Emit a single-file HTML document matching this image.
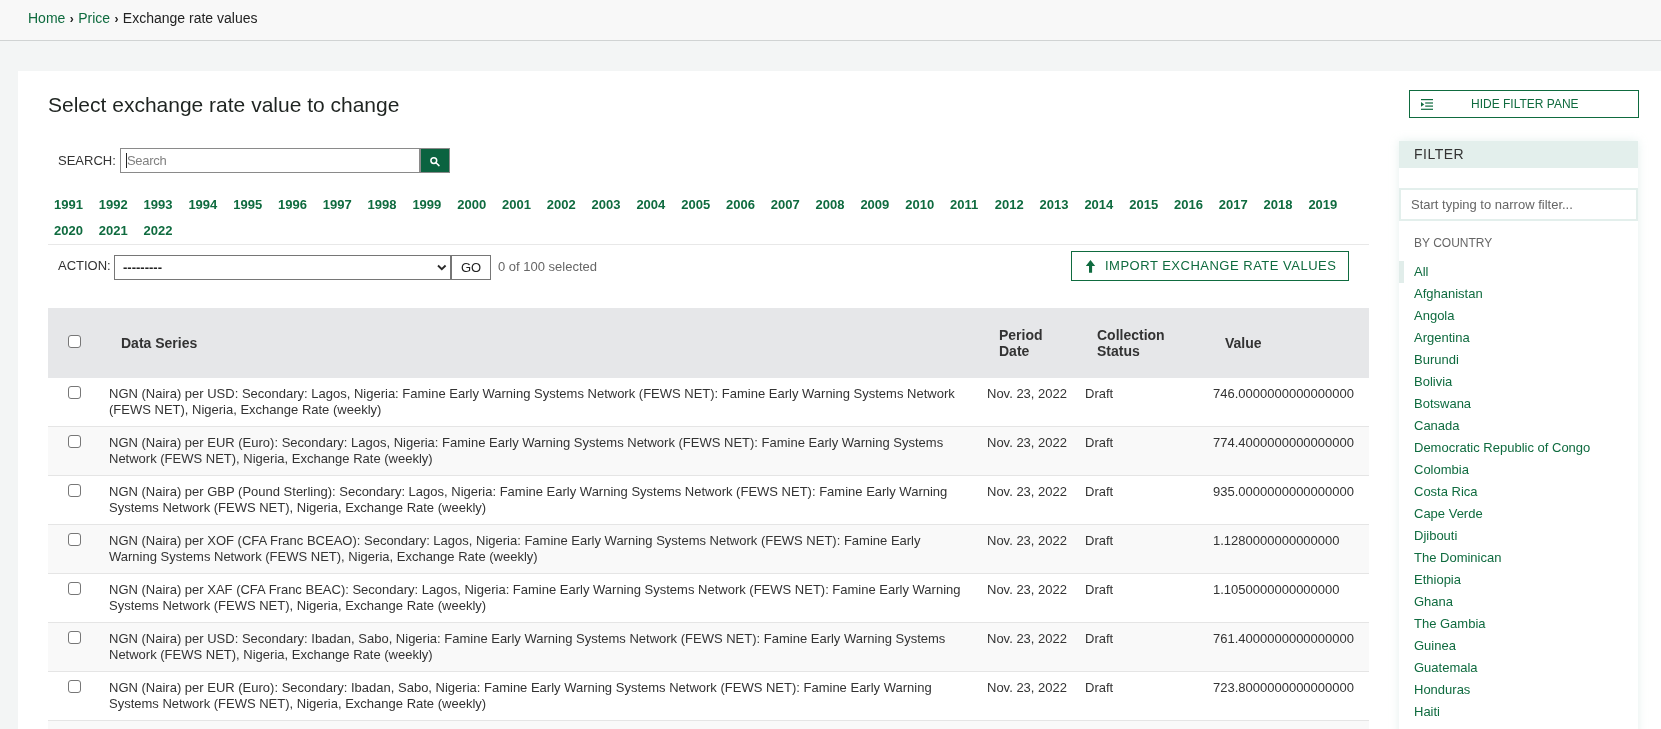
<!DOCTYPE html>
<html><head><meta charset="utf-8">
<style>
body{will-change:transform}
*{box-sizing:border-box}
html,body{margin:0;padding:0}
body{width:1661px;height:729px;overflow:hidden;position:relative;background:#f3f5f5;font-family:"Liberation Sans",sans-serif;color:#333;font-size:13px;line-height:16px}
a{color:#0f6b3f;text-decoration:none}
.abs{position:absolute}
#hdr{left:0;top:0;width:1661px;height:41px;background:#f8f8f8;border-bottom:1px solid #d0d3d3}
#crumbs{left:28px;top:10px;font-size:14px;line-height:16px;color:#222;white-space:nowrap}
#crumbs .sep{font-size:12px;font-weight:bold;padding:0 0.5px}
#box{left:18px;top:71px;width:1643px;height:658px;background:#fff}
#title{left:48px;top:93px;font-size:21px;line-height:24px;color:#1f2421;white-space:nowrap}
#slabel{left:58px;top:153px;color:#333;white-space:nowrap}
#sinput{left:120px;top:148px;width:300px;height:25px;border:1px solid #8a8a8a;background:#fff}
#sinput span{position:absolute;left:6px;top:4px;color:#808080;letter-spacing:-0.3px}
#sinput i{position:absolute;left:5px;top:4px;width:1px;height:15px;background:#222}
#sbtn{left:420px;top:148px;width:30px;height:25px;border:1px solid #8a8a8a;background:#0b6340}
#years{left:54px;top:197px;width:1320px;font-weight:bold;font-size:13px;line-height:16px}
#years a{position:absolute;white-space:nowrap}
#hr1{left:48px;top:244px;width:1321px;height:1px;background:#e8e8e8}
#alabel{left:58px;top:258px;white-space:nowrap}
#asel{left:114px;top:255px;width:337px;height:25px;border:1px solid #767676;background:#fff}
#asel span{position:absolute;left:8px;top:4px;color:#222;font-weight:bold}
#go{left:451px;top:255px;width:40px;height:25px;border:1px solid #767676;background:#fff;text-align:center;color:#222;padding-top:4px}
#sel{left:498px;top:259px;color:#666;white-space:nowrap}
#imp{left:1071px;top:251px;width:278px;height:30px;border:1px solid #0f6b3f;color:#0f6b3f;letter-spacing:0.5px;white-space:nowrap}
#imp span{position:absolute;left:33px;top:6px}
#tbl{left:48px;top:308px;width:1321px}
#thead{position:absolute;left:0;top:0;width:1321px;height:70px;background:#e6e7e9}
#thead div{position:absolute;font-weight:bold;font-size:14px;line-height:16px;color:#333;white-space:nowrap}
.row{position:absolute;left:0;width:1321px;height:49px;border-bottom:1px solid #e5e5e5;background:#fff}
.row.alt{background:#f9f9f9}
.row div{position:absolute;top:8px;white-space:nowrap}
.row .ds{left:61px;width:862px;white-space:normal}
.row .cb{left:20px;top:8px}
.row .c3{left:939px}
.row .c4{left:1037px}
.row .c5{left:1165px}
.cb{position:absolute;width:13px;height:13px;border:1px solid #777;border-radius:3px;background:#fff}
#hide{left:1409px;top:90px;width:230px;height:28px;border:1px solid #0f6b3f;color:#0f6b3f;font-size:12px;white-space:nowrap}
#hide span{position:absolute;left:61px;top:5px}
#fpane{left:1399px;top:141px;width:239px;height:600px;background:#fff;box-shadow:0 0 9px rgba(190,220,212,0.4)}
#fhead{left:0;top:0;width:239px;height:27px;background:#e3efec;font-size:14px;color:#333}
#fhead span{position:absolute;left:15px;top:5px;letter-spacing:0.5px}
#finput{left:0;top:47px;width:239px;height:33px;border:2px solid #e3efec;color:#666}
#finput span{position:absolute;left:10px;top:7px}
#bycountry{left:15px;top:94px;font-size:12px;color:#666;white-space:nowrap}
#clist{left:0;top:120px;width:239px}
#clist div{position:absolute;left:15px;white-space:nowrap;color:#0f6b3f}
#allbar{left:0;top:120px;width:5px;height:22px;background:#e1edea}

</style></head>
<body>
<div id="hdr" class="abs"></div>
<div id="crumbs" class="abs"><a>Home</a><span> </span><span class="sep">›</span><span> </span><a>Price</a><span> </span><span class="sep">›</span><span> </span>Exchange rate values</div>
<div id="box" class="abs"></div>
<div id="title" class="abs">Select exchange rate value to change</div>
<div id="slabel" class="abs">SEARCH:</div>
<div id="sinput" class="abs"><i></i><span>Search</span></div>
<div id="sbtn" class="abs"><svg width="28" height="23" viewBox="0 0 28 23" style="position:absolute;left:0;top:0"><circle cx="12.8" cy="11.6" r="2.9" fill="none" stroke="#fff" stroke-width="1.5"/><line x1="15" y1="13.8" x2="18" y2="16.6" stroke="#fff" stroke-width="1.5" stroke-linecap="round"/></svg></div>
<div id="years" class="abs"><a style="left:0.0px;top:0px">1991</a><a style="left:44.8px;top:0px">1992</a><a style="left:89.6px;top:0px">1993</a><a style="left:134.4px;top:0px">1994</a><a style="left:179.2px;top:0px">1995</a><a style="left:224.0px;top:0px">1996</a><a style="left:268.8px;top:0px">1997</a><a style="left:313.6px;top:0px">1998</a><a style="left:358.4px;top:0px">1999</a><a style="left:403.2px;top:0px">2000</a><a style="left:448.0px;top:0px">2001</a><a style="left:492.8px;top:0px">2002</a><a style="left:537.6px;top:0px">2003</a><a style="left:582.4px;top:0px">2004</a><a style="left:627.2px;top:0px">2005</a><a style="left:672.0px;top:0px">2006</a><a style="left:716.8px;top:0px">2007</a><a style="left:761.6px;top:0px">2008</a><a style="left:806.4px;top:0px">2009</a><a style="left:851.2px;top:0px">2010</a><a style="left:896.0px;top:0px">2011</a><a style="left:940.8px;top:0px">2012</a><a style="left:985.6px;top:0px">2013</a><a style="left:1030.4px;top:0px">2014</a><a style="left:1075.2px;top:0px">2015</a><a style="left:1120.0px;top:0px">2016</a><a style="left:1164.8px;top:0px">2017</a><a style="left:1209.6px;top:0px">2018</a><a style="left:1254.4px;top:0px">2019</a><a style="left:0.0px;top:26px">2020</a><a style="left:44.8px;top:26px">2021</a><a style="left:89.6px;top:26px">2022</a></div>
<div id="hr1" class="abs"></div>
<div id="alabel" class="abs">ACTION:</div>
<div id="asel" class="abs"><span>---------</span><svg width="12" height="8" viewBox="0 0 12 8" style="position:absolute;left:321px;top:8px"><path d="M2 1.5 L5.8 5.2 L9.6 1.5" fill="none" stroke="#2a2a2a" stroke-width="1.9"/></svg></div>
<div id="go" class="abs">GO</div>
<div id="sel" class="abs">0 of 100 selected</div>
<div id="imp" class="abs"><svg width="12" height="14" viewBox="0 0 12 14" style="position:absolute;left:13px;top:8px"><path d="M5.5 0 L10.2 5.9 L7.1 5.9 L7.1 12.8 L4 12.8 L4 5.9 L0.8 5.9 Z" fill="#0f6b3f"/></svg><span>IMPORT EXCHANGE RATE VALUES</span></div>
<div id="tbl" class="abs"><div id="thead"><span class="cb" style="left:20px;top:27px"></span><div id="h1" style="left:73px;top:27px">Data Series</div><div id="h2" style="left:951px;top:19px">Period<br>Date</div><div id="h3" style="left:1049px;top:19px">Collection<br>Status</div><div id="h4" style="left:1177px;top:27px">Value</div></div>
<div class="row" style="top:70px"><span class="cb"></span><div class="ds">NGN (Naira) per USD: Secondary: Lagos, Nigeria: Famine Early Warning Systems Network (FEWS NET): Famine Early Warning Systems Network (FEWS NET), Nigeria, Exchange Rate (weekly)</div><div class="c3">Nov. 23, 2022</div><div class="c4">Draft</div><div class="c5">746.0000000000000000</div></div>
<div class="row alt" style="top:119px"><span class="cb"></span><div class="ds">NGN (Naira) per EUR (Euro): Secondary: Lagos, Nigeria: Famine Early Warning Systems Network (FEWS NET): Famine Early Warning Systems Network (FEWS NET), Nigeria, Exchange Rate (weekly)</div><div class="c3">Nov. 23, 2022</div><div class="c4">Draft</div><div class="c5">774.4000000000000000</div></div>
<div class="row" style="top:168px"><span class="cb"></span><div class="ds">NGN (Naira) per GBP (Pound Sterling): Secondary: Lagos, Nigeria: Famine Early Warning Systems Network (FEWS NET): Famine Early Warning Systems Network (FEWS NET), Nigeria, Exchange Rate (weekly)</div><div class="c3">Nov. 23, 2022</div><div class="c4">Draft</div><div class="c5">935.0000000000000000</div></div>
<div class="row alt" style="top:217px"><span class="cb"></span><div class="ds">NGN (Naira) per XOF (CFA Franc BCEAO): Secondary: Lagos, Nigeria: Famine Early Warning Systems Network (FEWS NET): Famine Early Warning Systems Network (FEWS NET), Nigeria, Exchange Rate (weekly)</div><div class="c3">Nov. 23, 2022</div><div class="c4">Draft</div><div class="c5">1.1280000000000000</div></div>
<div class="row" style="top:266px"><span class="cb"></span><div class="ds">NGN (Naira) per XAF (CFA Franc BEAC): Secondary: Lagos, Nigeria: Famine Early Warning Systems Network (FEWS NET): Famine Early Warning Systems Network (FEWS NET), Nigeria, Exchange Rate (weekly)</div><div class="c3">Nov. 23, 2022</div><div class="c4">Draft</div><div class="c5">1.1050000000000000</div></div>
<div class="row alt" style="top:315px"><span class="cb"></span><div class="ds">NGN (Naira) per USD: Secondary: Ibadan, Sabo, Nigeria: Famine Early Warning Systems Network (FEWS NET): Famine Early Warning Systems Network (FEWS NET), Nigeria, Exchange Rate (weekly)</div><div class="c3">Nov. 23, 2022</div><div class="c4">Draft</div><div class="c5">761.4000000000000000</div></div>
<div class="row" style="top:364px"><span class="cb"></span><div class="ds">NGN (Naira) per EUR (Euro): Secondary: Ibadan, Sabo, Nigeria: Famine Early Warning Systems Network (FEWS NET): Famine Early Warning Systems Network (FEWS NET), Nigeria, Exchange Rate (weekly)</div><div class="c3">Nov. 23, 2022</div><div class="c4">Draft</div><div class="c5">723.8000000000000000</div></div>
<div class="row alt" style="top:413px"><span class="cb"></span><div class="ds">NGN (Naira) per GBP (Pound Sterling): Secondary: Ibadan, Sabo, Nigeria: Famine Early Warning Systems Network (FEWS NET): Famine Early Warning Systems Network (FEWS NET), Nigeria, Exchange Rate (weekly)</div><div class="c3">Nov. 23, 2022</div><div class="c4">Draft</div><div class="c5">935.0000000000000000</div></div>
</div>
<div id="hide" class="abs"><svg width="14" height="12" viewBox="0 0 14 12" style="position:absolute;left:11px;top:8px"><rect x="0" y="0" width="12" height="1.2" fill="#0f6b3f"/><rect x="4.2" y="3.4" width="7.8" height="1.2" fill="#0f6b3f"/><rect x="4.2" y="6.5" width="7.8" height="1.2" fill="#0f6b3f"/><rect x="0" y="9.7" width="12" height="1.2" fill="#0f6b3f"/><path d="M0 3 L3.2 5.4 L0 7.8Z" fill="#0f6b3f"/></svg><span>HIDE FILTER PANE</span></div>
<div id="fpane" class="abs">
  <div id="fhead" class="abs"><span>FILTER</span></div>
  <div id="finput" class="abs"><span>Start typing to narrow filter...</span></div>
  <div id="bycountry" class="abs">BY COUNTRY</div>
  <div id="allbar" class="abs"></div>
  <div id="clist" class="abs"><div style="top:3px">All</div><div style="top:25px">Afghanistan</div><div style="top:47px">Angola</div><div style="top:69px">Argentina</div><div style="top:91px">Burundi</div><div style="top:113px">Bolivia</div><div style="top:135px">Botswana</div><div style="top:157px">Canada</div><div style="top:179px">Democratic Republic of Congo</div><div style="top:201px">Colombia</div><div style="top:223px">Costa Rica</div><div style="top:245px">Cape Verde</div><div style="top:267px">Djibouti</div><div style="top:289px">The Dominican</div><div style="top:311px">Ethiopia</div><div style="top:333px">Ghana</div><div style="top:355px">The Gambia</div><div style="top:377px">Guinea</div><div style="top:399px">Guatemala</div><div style="top:421px">Honduras</div><div style="top:443px">Haiti</div><div style="top:465px">Kenya</div></div>
</div>

</body></html>
